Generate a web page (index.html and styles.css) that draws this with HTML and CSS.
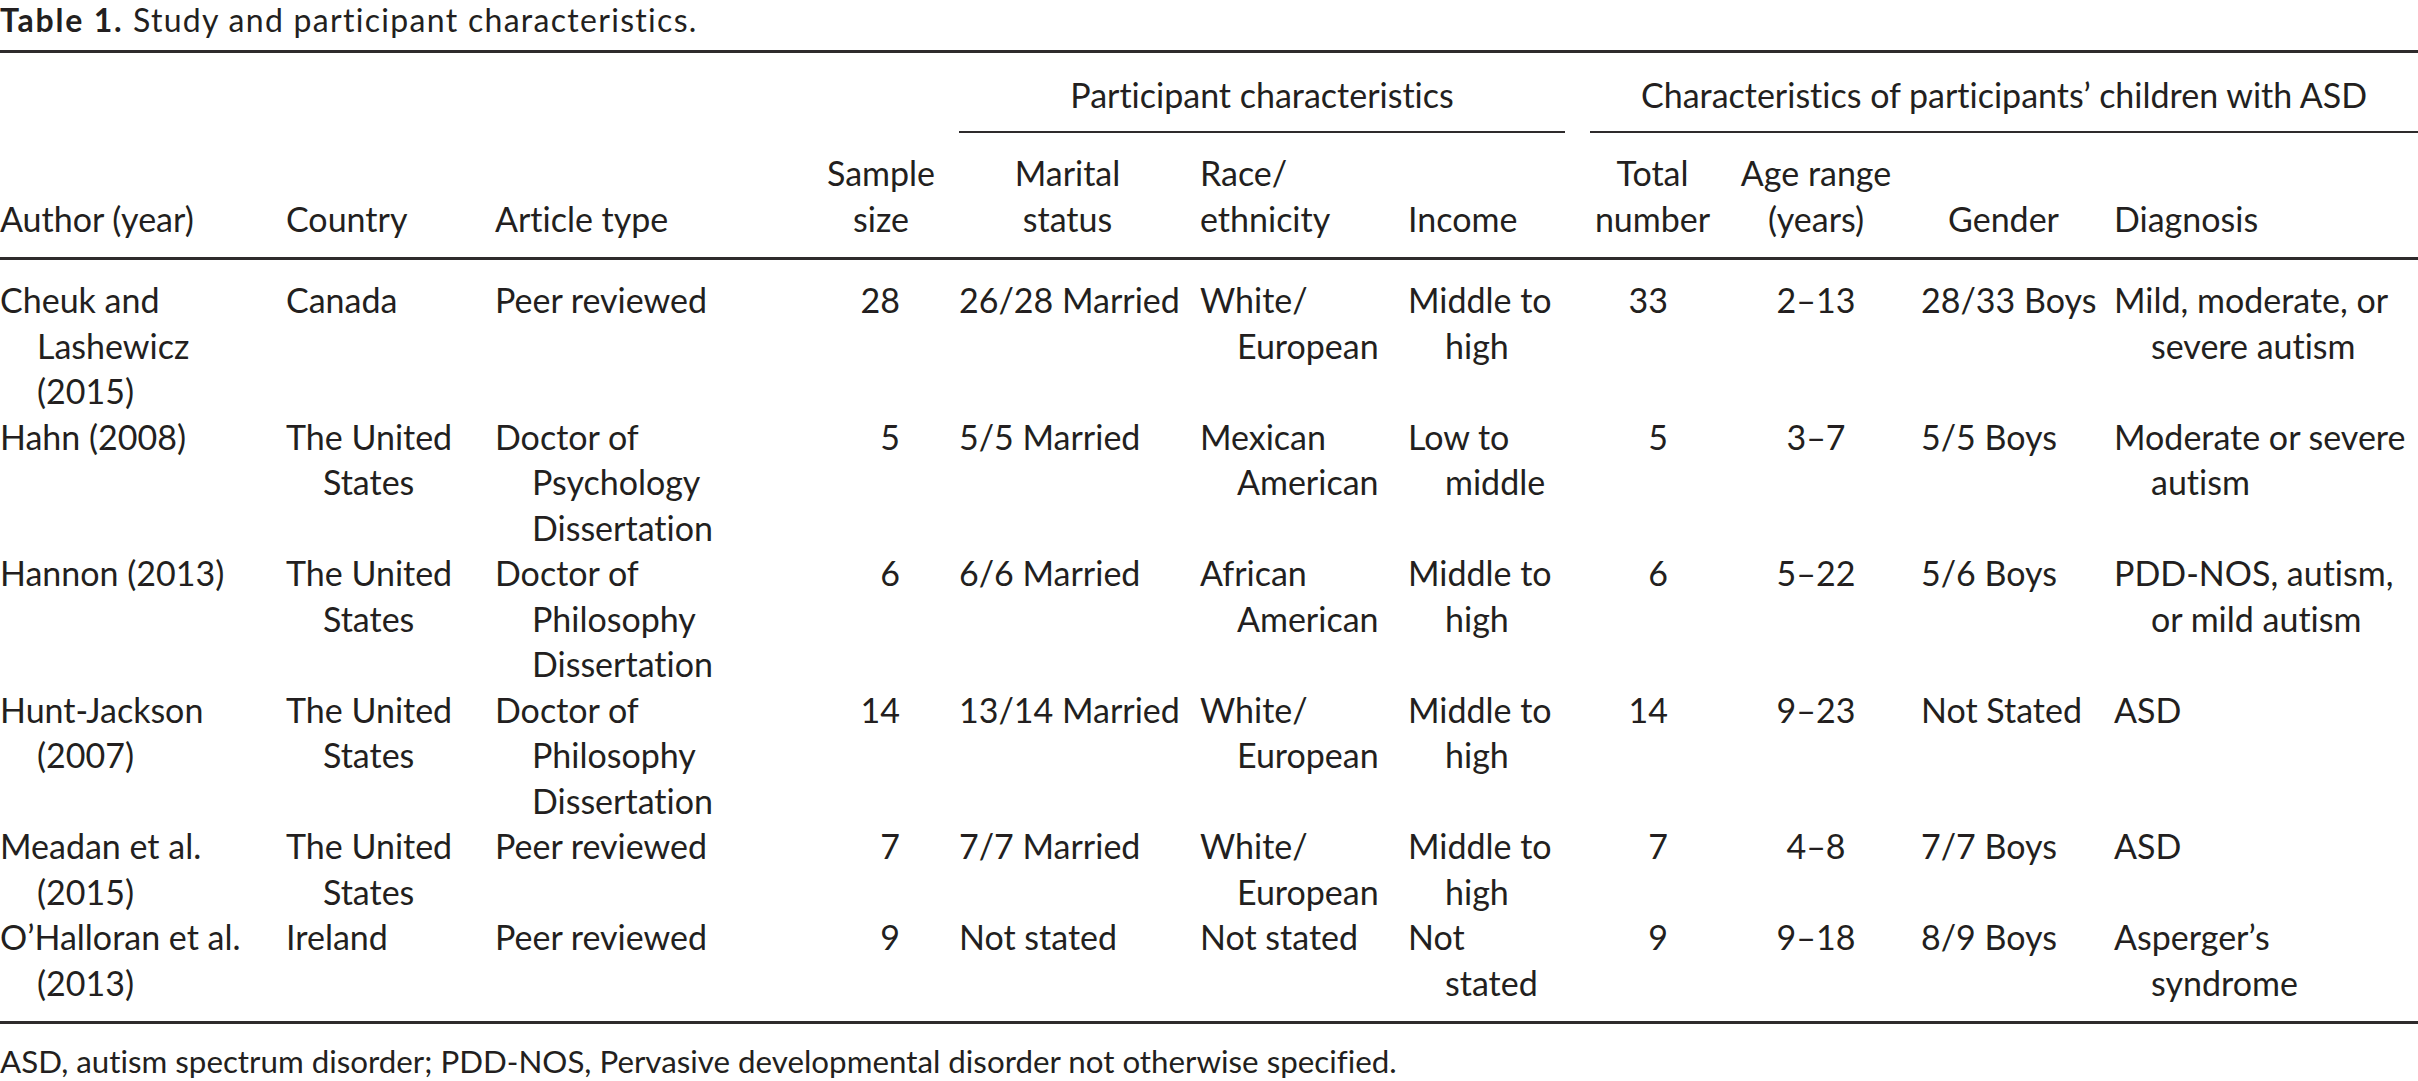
FILE: index.html
```html
<!DOCTYPE html>
<html lang="en">
<head>
<meta charset="utf-8">
<title>Table 1. Study and participant characteristics.</title>
<link rel="stylesheet" href="styles.css">
</head>
<body>
<div class="page">
  <p class="caption"><b>Table 1.</b> Study and participant characteristics.</p>
  <table class="tbl">
    <colgroup>
      <col class="c-author">
      <col class="c-country">
      <col class="c-type">
      <col class="c-sample">
      <col class="c-marital">
      <col class="c-race">
      <col class="c-income">
      <col class="c-total">
      <col class="c-age">
      <col class="c-gender">
      <col class="c-diag">
    </colgroup>
    <thead>
      <tr class="group-row">
        <th colspan="4"></th>
        <th colspan="3" class="spanner"><div class="spanner-in sp1">Participant characteristics</div></th>
        <th colspan="4" class="spanner"><div class="spanner-in sp2">Characteristics of participants’ children with ASD</div></th>
      </tr>
      <tr class="col-row">
        <th class="l">Author (year)</th>
        <th class="l">Country</th>
        <th class="l">Article type</th>
        <th class="c">Sample<br>size</th>
        <th class="c marital">Marital<br>status</th>
        <th class="l">Race/<br>ethnicity</th>
        <th class="l">Income</th>
        <th class="c">Total<br>number</th>
        <th class="c age">Age range<br>(years)</th>
        <th class="c gender">Gender</th>
        <th class="l">Diagnosis</th>
      </tr>
    </thead>
    <tbody>
      <tr>
        <td class="h">Cheuk and<br>Lashewicz<br>(2015)</td>
        <td class="h">Canada</td>
        <td class="h">Peer reviewed</td>
        <td class="num">28</td>
        <td class="h marital">26/28 Married</td>
        <td class="h">White/<br>European</td>
        <td class="h">Middle to<br>high</td>
        <td class="num total">33</td>
        <td class="c age">2–13</td>
        <td class="h">28/33 Boys</td>
        <td class="h">Mild, moderate, or<br>severe autism</td>
      </tr>
      <tr>
        <td class="h">Hahn (2008)</td>
        <td class="h">The United<br>States</td>
        <td class="h">Doctor of<br>Psychology<br>Dissertation</td>
        <td class="num">5</td>
        <td class="h marital">5/5 Married</td>
        <td class="h">Mexican<br>American</td>
        <td class="h">Low to<br>middle</td>
        <td class="num total">5</td>
        <td class="c age">3–7</td>
        <td class="h">5/5 Boys</td>
        <td class="h">Moderate or severe<br>autism</td>
      </tr>
      <tr>
        <td class="h">Hannon (2013)</td>
        <td class="h">The United<br>States</td>
        <td class="h">Doctor of<br>Philosophy<br>Dissertation</td>
        <td class="num">6</td>
        <td class="h marital">6/6 Married</td>
        <td class="h">African<br>American</td>
        <td class="h">Middle to<br>high</td>
        <td class="num total">6</td>
        <td class="c age">5–22</td>
        <td class="h">5/6 Boys</td>
        <td class="h">PDD-NOS, autism,<br>or mild autism</td>
      </tr>
      <tr>
        <td class="h">Hunt-Jackson<br>(2007)</td>
        <td class="h">The United<br>States</td>
        <td class="h">Doctor of<br>Philosophy<br>Dissertation</td>
        <td class="num">14</td>
        <td class="h marital">13/14 Married</td>
        <td class="h">White/<br>European</td>
        <td class="h">Middle to<br>high</td>
        <td class="num total">14</td>
        <td class="c age">9–23</td>
        <td class="h">Not Stated</td>
        <td class="h">ASD</td>
      </tr>
      <tr>
        <td class="h">Meadan et al.<br>(2015)</td>
        <td class="h">The United<br>States</td>
        <td class="h">Peer reviewed</td>
        <td class="num">7</td>
        <td class="h marital">7/7 Married</td>
        <td class="h">White/<br>European</td>
        <td class="h">Middle to<br>high</td>
        <td class="num total">7</td>
        <td class="c age">4–8</td>
        <td class="h">7/7 Boys</td>
        <td class="h">ASD</td>
      </tr>
      <tr>
        <td class="h">O’Halloran et al.<br>(2013)</td>
        <td class="h">Ireland</td>
        <td class="h">Peer reviewed</td>
        <td class="num">9</td>
        <td class="h marital">Not stated</td>
        <td class="h">Not stated</td>
        <td class="h">Not<br>stated</td>
        <td class="num total">9</td>
        <td class="c age">9–18</td>
        <td class="h">8/9 Boys</td>
        <td class="h">Asperger’s<br>syndrome</td>
      </tr>
    </tbody>
  </table>
  <p class="note">ASD, autism spectrum disorder; PDD-NOS, Pervasive developmental disorder not otherwise specified.</p>
</div>
</body>
</html>
```

FILE: styles.css
```css
html, body {
  margin: 0;
  padding: 0;
  background: #ffffff;
  overflow: hidden;
}

.page {
  width: 2418px;
  color: #231f20;
  font-family: Lato, "Open Sans", "Liberation Sans", sans-serif;
  font-variant-ligatures: none;
}

.caption {
  margin: 0;
  font-size: 32px;
  line-height: 40px;
  letter-spacing: 1.3px;
  white-space: nowrap;
}

.caption b {
  font-weight: 700;
  letter-spacing: 1.8px;
}

.tbl {
  margin-top: 10px;
  width: 2418px;
  table-layout: fixed;
  border-collapse: separate;
  border-spacing: 0;
  border-top: 3px solid #2e2b2c;
  border-bottom: 3px solid #2e2b2c;
  font-size: 34px;
  line-height: 45.5px;
}

.c-author { width: 286px; }
.c-country { width: 209px; }
.c-type { width: 323px; }
.c-sample { width: 126px; }
.c-marital { width: 256px; }
.c-race { width: 208px; }
.c-income { width: 182px; }
.c-total { width: 125px; }
.c-age { width: 206px; }
.c-gender { width: 193px; }
.c-diag { width: 304px; }

.tbl th,
.tbl td {
  padding: 0;
  font-weight: 400;
  white-space: nowrap;
  vertical-align: top;
}

.group-row th {
  vertical-align: bottom;
}

.spanner-in {
  padding-top: 19px;
  padding-bottom: 13.5px;
  border-bottom: 2px solid #2e2b2c;
  text-align: center;
}

.sp1 {
  margin-left: 15px;
  margin-right: 25px;
}

.col-row th {
  vertical-align: bottom;
  padding-top: 17px;
  padding-bottom: 16px;
  border-bottom: 3px solid #2e2b2c;
}

.col-row th.l { text-align: left; }
.col-row th.c { text-align: center; }
.col-row th.marital { padding-left: 15px; padding-right: 24px; }
.col-row th.age { padding-right: 4px; }
.col-row th.gender { padding-right: 28px; }

.tbl td.h {
  text-align: left;
  padding-left: 37px;
  text-indent: -37px;
}

.tbl td.h.marital {
  padding-left: 52px;
}

.tbl td.num {
  text-align: right;
  padding-right: 44px;
}

.tbl td.num.total {
  padding-right: 47px;
}

.tbl td.c {
  text-align: center;
}

.tbl td.age {
  padding-right: 4px;
}

.tbl tbody tr:first-child td {
  padding-top: 17px;
}

.tbl tbody tr:last-child td {
  padding-bottom: 16px;
}

.note {
  margin: 16.5px 0 0 0;
  font-size: 31.3px;
  line-height: 40px;
  white-space: nowrap;
}
```
